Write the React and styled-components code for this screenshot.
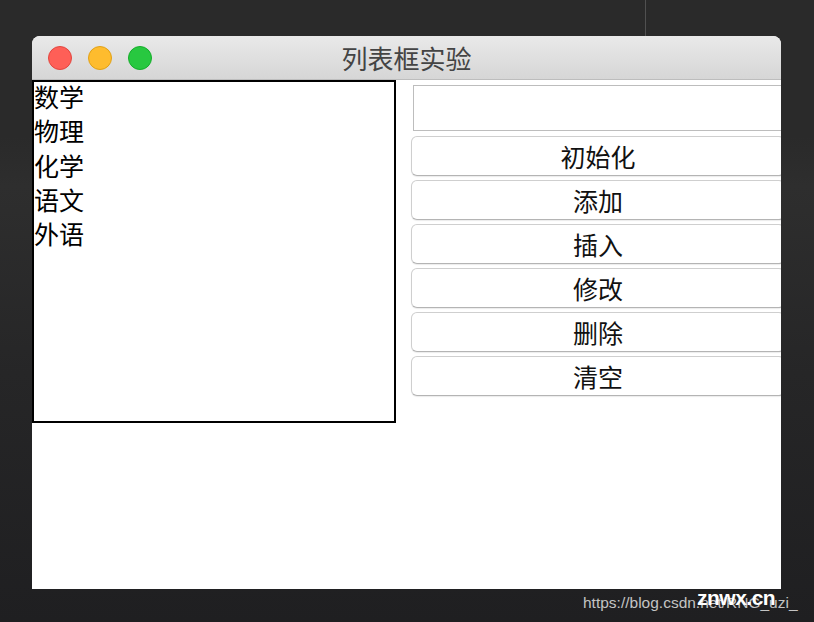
import styled, { createGlobalStyle } from 'styled-components';

const CJK = `"Noto Sans CJK SC", "Noto Sans", sans-serif`;

const GlobalStyle = createGlobalStyle`
  html, body {
    margin: 0;
    padding: 0;
    width: 814px;
    height: 622px;
    overflow: hidden;
    background: #272727;
  }
`;

const subjects = ['数学', '物理', '化学', '语文', '外语'];
const actions = ['初始化', '添加', '插入', '修改', '删除', '清空'];

const App = () => {
  return (
    <>
      <GlobalStyle />
      <Desktop>
        <Divider />
        <Window>
          <TitleBar>
            <Lights>
              <Light $color="#fe5f57" $edge="#e2463f" />
              <Light $color="#febc2e" $edge="#e1a116" />
              <Light $color="#28c840" $edge="#14ae2a" />
            </Lights>
            <Title>列表框实验</Title>
          </TitleBar>
          <Content>
            <ListBox>
              <Items>
                {subjects.map((s) => (
                  <Item key={s}>{s}</Item>
                ))}
              </Items>
            </ListBox>
            <Controls>
              <TextField />
              {actions.map((a) => (
                <Button key={a}>{a}</Button>
              ))}
            </Controls>
          </Content>
        </Window>
        <Watermark>https://blog.csdn.net/RNG_uzi_</Watermark>
        <Stamp>znwx.cn</Stamp>
      </Desktop>
    </>
  );
};

const Desktop = styled.div`
  position: relative;
  width: 814px;
  height: 622px;
  padding: 36px 0 0 32px;
  box-sizing: border-box;
  background: linear-gradient(180deg, #2a2a2a 0%, #2a2a2a 22%, #2e2e2e 30%, #262627 60%, #1f1f21 100%);
`;

const Divider = styled.div`
  position: absolute;
  left: 645px;
  top: 0;
  width: 1px;
  height: 36px;
  background: #505050;
`;

const Window = styled.div`
  width: 749px;
  height: 553px;
  display: flex;
  flex-direction: column;
  border-radius: 8px 8px 0 0;
  overflow: hidden;
  background: #fff;
`;

const TitleBar = styled.div`
  position: relative;
  height: 43px;
  flex-shrink: 0;
  display: flex;
  align-items: center;
  justify-content: center;
  background: linear-gradient(180deg, #e9e9e9 0%, #d6d6d6 100%);
  border-bottom: 1px solid #bdbdbd;
`;

const Lights = styled.div`
  position: absolute;
  left: 16px;
  top: 10px;
  display: flex;
  gap: 16px;
`;

const Light = styled.span`
  width: 24px;
  height: 24px;
  border-radius: 50%;
  box-sizing: border-box;
  background: ${(p) => p.$color};
  border: 1px solid ${(p) => p.$edge};
`;

const Title = styled.div`
  font-family: ${CJK};
  font-size: 26px;
  line-height: 30px;
  color: #444;
  margin-left: 0;
`;

const Content = styled.div`
  flex: 1;
  display: flex;
  align-items: flex-start;
  gap: 15px;
  overflow: hidden;
`;

const ListBox = styled.div`
  width: 364px;
  height: 343px;
  flex-shrink: 0;
  box-sizing: border-box;
  border: 2px solid #000;
`;

const Items = styled.div`
  margin-top: -3px;
`;

const Item = styled.div`
  font-family: ${CJK};
  font-size: 25px;
  line-height: 34.3px;
  color: #000;
`;

const Controls = styled.div`
  width: 374px;
  flex-shrink: 0;
  display: flex;
  flex-direction: column;
  gap: 4px;
  padding-top: 5px;
`;

const TextField = styled.div`
  height: 46px;
  margin-left: 2px;
  margin-bottom: 1px;
  box-sizing: border-box;
  border: 1px solid #bdbdbd;
  background: #fff;
`;

const Button = styled.div`
  height: 40px;
  box-sizing: border-box;
  display: flex;
  align-items: center;
  justify-content: center;
  border: 1px solid #cfcfcf;
  border-bottom-color: #b4b4b4;
  border-radius: 6px;
  background: #fff;
  box-shadow: 0 1px 1px rgba(0, 0, 0, 0.08);
  font-family: ${CJK};
  font-size: 25px;
  color: #111;
`;

const Watermark = styled.div`
  position: absolute;
  left: 583px;
  top: 594px;
  font-family: "Liberation Sans", Arial, sans-serif;
  font-size: 15.5px;
  line-height: 18px;
  color: #c4c4c4;
`;

const Stamp = styled.div`
  position: absolute;
  left: 697px;
  top: 585px;
  font-family: "Liberation Sans", Arial, sans-serif;
  font-weight: bold;
  font-size: 21px;
  line-height: 26px;
  color: #fff;
  letter-spacing: -0.5px;
`;

export default App;
